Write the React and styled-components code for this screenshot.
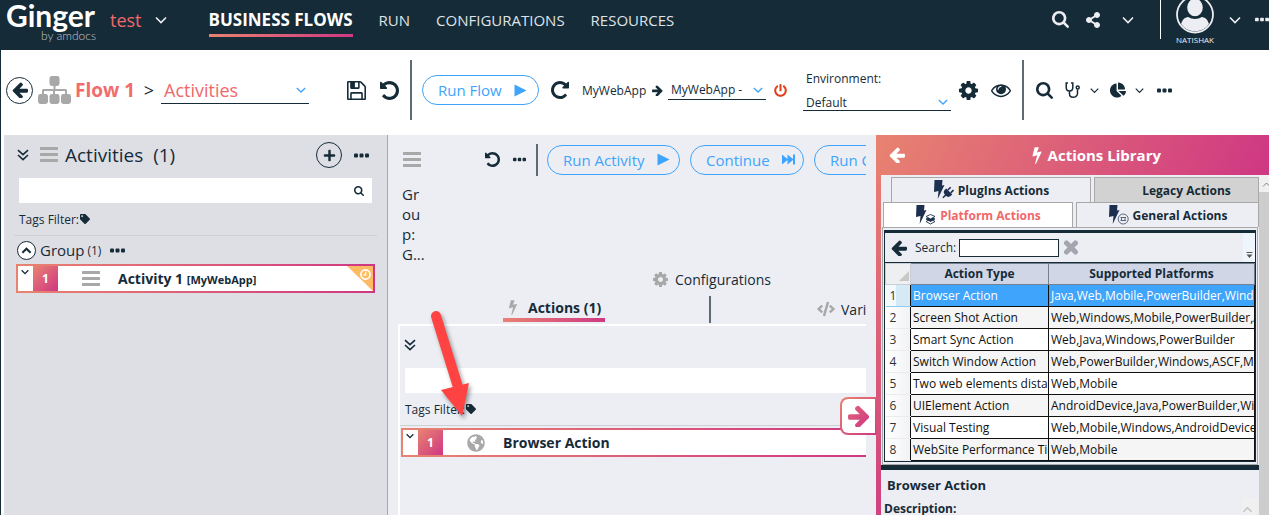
import React from "react";
import styled, { createGlobalStyle, css } from "styled-components";
import {
  FaChartPie,
  FaCode,
  FaGlobeAmericas,
  FaPlus,
  FaPowerOff,
  FaShareAlt,
  FaTag,
} from "react-icons/fa";

const ink = "#162b38";
const blue = "#3fa4fb";
const coral = "#f0686a";
const grey = "#a8a8a8";
const panel = "#edeef4";
const sunset = "linear-gradient(135deg, #e88370, #cf3783)";
const sunsetRow = "linear-gradient(90deg, #e88370, #cf3783)";

const GlobalStyle = createGlobalStyle`
  * { box-sizing: border-box; }
  body {
    margin: 0;
    background: #fff;
    color: ${ink};
    font-family: "Open Sans", "Noto Sans", sans-serif;
    font-size: 12px;
  }
  button, input, select { font: inherit; color: inherit; margin: 0; }
  svg { display: block; flex: none; }
  h1, h2, h3, p { margin: 0; font-weight: inherit; font-size: inherit; }
`;

/* ---------- icons ---------- */

const shapes = {
  search:
    "M1216 832q0-185-131.5-316.5t-316.5-131.5-316.5 131.5-131.5 316.5 131.5 316.5 316.5 131.5 316.5-131.5 131.5-316.5zm512 832q0 52-38 90t-90 38q-54 0-90-38l-343-342q-179 124-399 124-143 0-273.5-55.5t-225-150-150-225-55.5-273.5 55.5-273.5 150-225 225-150 273.5-55.5 273.5 55.5 225 150 150 225 55.5 273.5q0 220-124 399l343 343q37 37 37 90z",
  undo:
    "M1664 896q0 156-61 298t-164 245-245 164-298 61q-172 0-327-72.5t-264-204.5q-7-10-6.5-22.5t8.5-20.5l137-138q10-9 25-9 16 2 23 12 73 95 179 147t225 52q104 0 198.5-40.5t163.5-109.5 109.5-163.5 40.5-198.5-40.5-198.5-109.5-163.5-163.5-109.5-198.5-40.5q-98 0-188 35.5t-160 101.5l137 138q31 30 14 69-17 40-59 40h-448q-26 0-45-19t-19-45v-448q0-42 40-59 39-17 69 14l130 129q107-101 244.5-156.5t284.5-55.5q156 0 298 61t245 164 164 245 61 298z",
  cog:
    "M1152 896q0-106-75-181t-181-75-181 75-75 181 75 181 181 75 181-75 75-181zm512-109v222q0 12-8 23t-20 13l-185 28q-19 54-39 91 35 50 107 138 10 12 10 25t-9 23q-27 37-99 108t-94 71q-12 0-26-9l-138-108q-44 23-91 38-16 136-29 186-7 28-36 28h-222q-14 0-24.5-8.5t-11.5-21.5l-28-184q-49-16-90-37l-141 107q-10 9-25 9-14 0-25-11-126-114-165-168-7-10-7-23 0-12 8-23 15-21 51-66.5t54-70.5q-27-50-41-99l-183-27q-13-2-21-12.5t-8-23.5v-222q0-12 8-23t19-13l186-28q14-46 39-92-40-57-107-138-10-12-10-24 0-10 9-23 26-36 98.5-107.5t94.5-71.5q13 0 26 10l138 107q44-23 91-38 16-136 29-186 7-28 36-28h222q14 0 24.5 8.5t11.5 21.5l28 184q49 16 90 37l142-107q9-9 24-9 13 0 25 10 129 119 165 170 7 8 7 22 0 12-8 23-15 21-51 66.5t-54 70.5q26 50 41 98l183 28q13 2 21 12.5t8 23.5z",
  arrow:
    "M1664 896v128q0 53-32.5 90.5t-84.5 37.5h-704l293 294q38 36 38 90t-38 90l-75 76q-37 37-90 37-52 0-91-37l-651-652q-37-37-37-90 0-52 37-91l651-650q38-38 91-38 52 0 90 38l75 74q38 38 38 91t-38 91l-293 293h704q52 0 84.5 37.5t32.5 90.5z",
  bolt:
    "M1333 566q18 20 7 44l-540 1157q-13 25-42 25-4 0-14-2-17-5-25.5-19t-4.5-30l197-808-406 101q-4 1-12 1-18 0-31-11-18-15-13-39l201-825q4-14 16-23t28-9h328q19 0 32 12.5t13 29.5q0 8-5 18l-171 463 396-98q8-2 12-2 19 0 34 15z",
  eye:
    "M1664 960q-152-236-381-353 61 104 61 225 0 185-131.5 316.5t-316.5 131.5-316.5-131.5-131.5-316.5q0-121 61-225-229 117-381 353 133 205 333.5 326.5t434.5 121.5 434.5-121.5 333.5-326.5zm-720-384q0-20-14-34t-34-14q-125 0-214.5 89.5t-89.5 214.5q0 20 14 34t34 14 34-14 14-34q0-86 61-147t147-61q20 0 34-14t14-34zm848 384q0 34-20 69-140 230-376.5 368.5t-499.5 138.5-499.5-139-376.5-368q-20-35-20-69t20-69q140-229 376.5-368t499.5-139 499.5 139 376.5 368q20 35 20 69z",
  save:
    "M512 1536h768v-384h-768v384zm896 0h128v-896q0-14-10-38.5t-20-34.5l-281-281q-10-10-34-20t-39-10v416q0 40-28 68t-68 28h-576q-40 0-68-28t-28-68v-416h-128v1280h128v-416q0-40 28-68t68-28h832q40 0 68 28t28 68v416zm-384-928v-320q0-13-9.5-22.5t-22.5-9.5h-192q-13 0-22.5 9.5t-9.5 22.5v320q0 13 9.5 22.5t22.5 9.5h192q13 0 22.5-9.5t9.5-22.5zm640 32v928q0 40-28 68t-68 28h-1344q-40 0-68-28t-28-68v-1344q0-40 28-68t68-28h928q40 0 88 20t76 48l280 280q28 28 48 76t20 88z",
};

const Glyph = ({ name, size = 18, flip, fill = "currentColor", box = "128 128 1536 1536" }) => (
  <svg width={size} height={size} viewBox={box} fill={fill} aria-hidden="true">
    <path d={shapes[name]} transform={flip ? "translate(1792 0) scale(-1 1)" : undefined} />
  </svg>
);

const Chevron = ({ size = 11, color = "currentColor", up, weight = 1.6 }) => (
  <svg width={size} height={size} viewBox="0 0 12 12" fill="none" stroke={color} strokeWidth={weight} aria-hidden="true">
    <path d={up ? "M1.5 8.5 6 4l4.5 4.5" : "M1 3.5 6 8.5l5-5"} />
  </svg>
);

const DoubleChevron = () => (
  <svg width="12" height="12" viewBox="0 0 12 12" fill="none" stroke="currentColor" strokeWidth="1.6" aria-hidden="true">
    <path d="M1 1.2 6 5.6l5-4.4M1 6 6 10.6 11 6" />
  </svg>
);

const Dots = ({ size = 15 }) => (
  <svg width={size} height="5" viewBox="0 0 15 5" fill="currentColor" aria-hidden="true">
    <rect width="4" height="4" y="0.5" rx="1" />
    <rect width="4" height="4" x="5.5" y="0.5" rx="1" />
    <rect width="4" height="4" x="11" y="0.5" rx="1" />
  </svg>
);

const Bars = () => (
  <svg width="18" height="16" viewBox="0 0 18 16" fill={grey} aria-hidden="true">
    <rect width="18" height="3" rx="0.5" />
    <rect y="6" width="18" height="3" rx="0.5" />
    <rect y="12" width="18" height="3" rx="0.5" />
  </svg>
);

const Cross = () => (
  <svg width="16" height="15" viewBox="0 0 16 15" fill="none" stroke="currentColor" strokeWidth="5" strokeLinecap="round" aria-hidden="true">
    <path d="M3.500 3l9 9M12.500 3l-9 9" />
  </svg>
);

const Sitemap = () => (
  <svg width="33" height="28" viewBox="0 0 33 28" fill={grey} aria-hidden="true">
    <rect x="11.5" y="0" width="10" height="10" rx="2.4" />
    <rect x="0" y="18" width="10" height="10" rx="2.4" />
    <rect x="11.5" y="18" width="10" height="10" rx="2.4" />
    <rect x="23" y="18" width="10" height="10" rx="2.4" />
    <path d="M15.500 9h2v4h10q1.500 0 1.500 1.500V19h-2v-4h-10v4h-2v-4H6v4H4v-4.500Q4 13 5.500 13h10z" />
  </svg>
);

const Stethoscope = () => (
  <svg width="16" height="17" viewBox="0 0 16 17" fill="none" stroke={ink} strokeWidth="1.5" aria-hidden="true">
    <path d="M3 1H1.200v4.500q0 3.500 3.300 3.500t3.300-3.500V1H6M4.500 9v3q0 3.200 3.600 3.200t4.400-3.400V7.500" />
    <circle cx="12.700" cy="5.600" r="1.500" />
  </svg>
);

const Play = () => (
  <svg width="13" height="13" viewBox="0 0 13 13" fill="currentColor" aria-hidden="true">
    <path d="M0.500 0.500 12.500 6.500 0.500 12.500z" />
  </svg>
);

const FastForward = () => (
  <svg width="13" height="11" viewBox="0 0 13 11" fill="currentColor" aria-hidden="true">
    <path d="M0 0.500 5.500 5V0.500L11 5V0.500h2v10h-2V6l-5.500 4.500V6L0 10.500z" />
  </svg>
);

const Avatar = () => (
  <svg width="38" height="34" viewBox="0 5 38 34" aria-hidden="true">
    <circle cx="19" cy="19.500" r="18" fill={ink} stroke={panel} strokeWidth="1.800" />
    <clipPath id="face"><circle cx="19" cy="19.500" r="16.800" /></clipPath>
    <g clipPath="url(#face)" fill={panel}>
      <path d="M4 38q0-15 8-16 7 4 14 0 8 1 8 16z" />
      <ellipse cx="19" cy="12.500" rx="8.500" ry="9.500" stroke={ink} strokeWidth="1.400" />
    </g>
  </svg>
);

const BoltBadge = ({ kind }) => (
  <svg width="21" height="20" viewBox="0 0 21 20" aria-hidden="true">
    <path d="M1.500 0h8L9 5.500l2.500-.5L4.700 19l.8-8-4.500 1z" fill="#1d2f4f" />
    {kind === "plug" && (
      <g transform="rotate(45 15 13)" fill="#1d2f4f">
        <rect x="12" y="7" width="1.600" height="4" />
        <rect x="16" y="7" width="1.600" height="4" />
        <path d="M10.500 11h8.500v2q0 3.500-4.200 3.500T10.500 13zM14 16h1.600v4H14z" />
      </g>
    )}
    {kind === "layers" && (
      <g fill="#fff" stroke="#1d2f4f" strokeWidth="0.900">
        <path d="M11 16.500l4.500 2.500 4.500-2.500-4.500-2.500z" />
        <path d="M11 14l4.500 2.500L20 14l-4.500-2.500z" fill="#1d2f4f" />
        <path d="M11 11.500l4.500 2.500 4.500-2.500-4.500-2z" />
      </g>
    )}
    {kind === "ring" && (
      <g fill="none" stroke="#4b5870" strokeWidth="0.900">
        <circle cx="15.200" cy="14" r="5" />
        <path d="M12.500 12.500h5.500M13.500 12.500v3M17 12.500v3M12.500 15.500h5.500" />
      </g>
    )}
  </svg>
);

const Clock = () => (
  <svg width="26" height="25" viewBox="0 0 26 25" aria-hidden="true">
    <path d="M0 0h26v25z" fill="#fdbb63" />
    <circle cx="18.500" cy="8.500" r="4.600" fill="none" stroke="#fff" strokeWidth="1.700" />
    <path d="M18.700 5.800v3h-2.500" fill="none" stroke="#fff" strokeWidth="1.200" />
  </svg>
);

/* ---------- shared parts ---------- */

const IconButton = styled.button`
  display: inline-flex;
  align-items: center;
  justify-content: center;
  flex: none;
  padding: 0;
  border: 0;
  background: none;
  cursor: pointer;
  color: ${(p) => p.$color || "inherit"};
  margin-left: ${(p) => p.$gap || 0}px;
`;

const RoundButton = styled(IconButton)`
  width: ${(p) => p.$size}px;
  height: ${(p) => p.$size}px;
  border: 1px solid ${ink};
  border-radius: 50%;
  background: ${(p) => p.$fill || "transparent"};
`;

const Rule = styled.span`
  flex: none;
  width: 2px;
  height: ${(p) => p.$height}px;
  margin-left: ${(p) => p.$gap}px;
  background: #5c6b74;
`;

const Pill = styled.button`
  flex: none;
  display: inline-flex;
  align-items: center;
  gap: 12px;
  height: 30px;
  width: ${(p) => p.$width}px;
  padding: 0 0 0 15px;
  margin-left: ${(p) => p.$gap}px;
  border: 1px solid ${blue};
  border-radius: 15px;
  background: ${(p) => p.$fill || "transparent"};
  color: ${blue};
  font-size: 15px;
  line-height: 20px;
  white-space: nowrap;
`;

const SelectBox = styled.span`
  flex: none;
  display: flex;
  align-items: center;
  width: ${(p) => p.$width}px;
  height: ${(p) => p.$height}px;
  margin-left: ${(p) => p.$gap || 0}px;
  margin-top: ${(p) => p.$drop || 0}px;
  padding-right: ${(p) => p.$inset}px;
  border-bottom: 1px solid ${ink};
  color: ${(p) => p.$color || ink};
  font-size: ${(p) => p.$font}px;
  select {
    flex: 1;
    min-width: 0;
    padding: 0 0 0 3px;
    border: 0;
    background: none;
    appearance: none;
    outline: none;
  }
`;

const UnderSelect = ({ label, value, ...rest }) => (
  <SelectBox {...rest}>
    <select aria-label={label} defaultValue={value}>
      <option>{value}</option>
    </select>
    <Chevron size={10} color={blue} />
  </SelectBox>
);

/* ---------- header ---------- */

const Shell = styled.div`
  display: flex;
  flex-direction: column;
  min-height: 100vh;
  overflow: hidden;
  border-left: 1px solid ${ink};
`;

const Header = styled.header`
  display: flex;
  align-items: flex-start;
  height: 50px;
  padding-left: 5px;
  background: ${ink};
  color: ${panel};
`;

const Logo = styled.div`
  width: 92px;
  text-align: right;
  font-family: Lato, sans-serif;
  color: #fff;
  strong { display: block; font-size: 30px; line-height: 30px; text-align: left; }
  small { display: block; padding-right: 2px; font-size: 12px; font-weight: 300; line-height: 12px; color: #c3c9cd; }
`;

const Solution = styled.button`
  display: flex;
  align-items: center;
  gap: 13px;
  height: 39px;
  margin-left: 12px;
  padding: 0;
  border: 0;
  background: none;
  font-size: 18px;
  span { color: ${coral}; }
`;

const Nav = styled.nav`
  display: flex;
  gap: 26px;
  margin-left: 42px;
`;

const NavLink = styled.a`
  padding-top: 9px;
  height: 37px;
  line-height: 22px;
  font-size: 15px;
  color: #dfe3e6;
  text-decoration: none;
  white-space: nowrap;
  ${(p) =>
    p.$active &&
    css`
      font-size: 17px;
      font-weight: 700;
      color: #fff;
      border-bottom: 3px solid;
      border-image: ${sunsetRow} 1;
    `}
`;

const HeaderTools = styled.div`
  display: flex;
  align-items: center;
  height: 39px;
  margin-left: auto;
`;

const User = styled.div`
  display: flex;
  flex-direction: column;
  align-items: center;
  width: 69px;
  border-left: 1px solid #fff;
  height: 39px;
  font-size: 8px;
  line-height: 12px;
`;

/* ---------- toolbar ---------- */

const Toolbar = styled.div`
  display: flex;
  align-items: center;
  height: 85px;
  padding: 0 0 5px 5px;
  white-space: nowrap;
`;

const FlowName = styled.h1`
  width: 63px;
  margin-left: 4px;
  font-size: 19px;
  font-weight: 700;
  color: #f26c6d;
`;

const Crumb = styled.span`
  width: 22px;
  font-size: 18px;
  text-align: center;
`;

const Target = styled.span`
  width: 64px;
  margin-left: 13px;
  font-size: 12px;
`;

const Environment = styled.div`
  flex: none;
  width: 148px;
  margin-left: 16px;
  padding-top: 2px;
  p { padding-left: 3px; line-height: 16px; font-size: 12px; }
`;

/* ---------- work area ---------- */

const Work = styled.main`
  flex: 1;
  display: grid;
  grid-template-columns: 384px minmax(0, 1fr) 393px;
  padding-left: 3px;
`;

const Activities = styled.section`
  min-width: 0;
  padding-right: 10px;
  border-right: 1px solid ${grey};
  background: #dedfe5;
`;

const PanelHead = styled.div`
  display: flex;
  align-items: center;
  height: 40px;
  padding: 0 8px 0 13px;
  h2 { margin: 0 auto 0 7px; font-size: 19px; white-space: pre; }
`;

const SearchField = styled.label`
  display: flex;
  align-items: center;
  height: 25px;
  margin: ${(p) => p.$margin};
  padding-right: 8px;
  background: #fff;
  input { flex: 1; min-width: 0; border: 0; background: none; outline: none; }
`;

const TagsFilter = styled.div`
  display: flex;
  align-items: center;
  gap: 1px;
  height: 32px;
  margin-left: ${(p) => p.$indent}px;
  font-size: 12px;
`;

const Divider = styled.div`
  height: 1px;
  margin-left: ${(p) => p.$indent}px;
  background: #cfd0d5;
`;

const GroupHead = styled.div`
  display: flex;
  align-items: center;
  height: 28px;
  padding-left: 13px;
  h3 { margin-left: 4px; font-size: 15px; }
  small { margin: 0 9px 0 3px; font-size: 12px; }
`;

const Item = styled.div`
  display: flex;
  align-items: center;
  height: 29px;
  margin: 0 ${(p) => (p.$open ? 0 : 2)}px 0 ${(p) => p.$indent}px;
  border: 2px solid;
  border-width: ${(p) => (p.$open ? "2px 0 2px 2px" : "2px")};
  border-image: ${sunsetRow} 1;
  background: #fff;
`;

const Fold = styled.button`
  align-self: stretch;
  flex: none;
  width: 15px;
  padding: 2px 0 0 3px;
  border: 0;
  background: none;
  display: flex;
`;

const Index = styled.span`
  flex: none;
  width: 25px;
  line-height: 25px;
  text-align: center;
  font-weight: 700;
  font-size: 12px;
  color: #fff;
  background: ${sunset};
`;

const ItemIcon = styled.span`
  flex: none;
  width: 60px;
  padding-left: 24px;
`;

const ItemName = styled.strong`
  flex: 1;
  font-size: 14px;
  white-space: nowrap;
  small { font-size: 11px; }
`;

const Detail = styled.section`
  position: relative;
  min-width: 0;
  padding-right: 10px;
  background: ${panel};
`;

const Clip = styled.div`
  overflow: hidden;
  height: 100%;
  display: flex;
  flex-direction: column;
`;

const RunBar = styled.div`
  display: flex;
  align-items: center;
  flex: none;
  height: 49px;
  padding-left: 15px;
`;

const GroupPath = styled.p`
  height: 82px;
  padding-left: 14px;
  font-size: 15px;
  line-height: 20px;
`;

const TabRow = styled.div`
  display: flex;
  flex: none;
  justify-content: ${(p) => (p.$center ? "center" : "flex-start")};
  height: ${(p) => p.$height}px;
  padding-left: ${(p) => p.$indent || 0}px;
`;

const Tab = styled.button`
  flex: none;
  display: flex;
  align-items: center;
  gap: ${(p) => p.$gap}px;
  width: ${(p) => p.$width || "auto"};
  height: 26px;
  margin-left: ${(p) => p.$indent || 0}px;
  padding: 0;
  border: 0;
  background: none;
  font-size: 14px;
  white-space: nowrap;
  ${(p) =>
    p.$active &&
    css`
      font-weight: 700;
      border-bottom: 4px solid;
      border-image: ${sunsetRow} 1;
    `}
`;

const ActionsBox = styled.div`
  flex: 1;
  margin-left: 10px;
  border: 2px solid #fff;
  border-width: 2px 0 0 2px;
`;

const BoxTop = styled.div`
  display: flex;
  align-items: center;
  height: 42px;
  padding: 0 0 4px 3px;
`;

const BelowDivider = styled.div`
  padding-top: 2px;
`;

const Expander = styled.button`
  position: absolute;
  top: 262px;
  right: 0;
  z-index: 1;
  display: flex;
  align-items: center;
  justify-content: center;
  width: 36px;
  height: 38px;
  padding: 0;
  border: 2px solid transparent;
  border-right-width: 1px;
  border-radius: 8px 0 0 8px;
  background: linear-gradient(#fff, #fff) padding-box, ${sunset} border-box;
`;

const Pointer = styled.svg`
  position: absolute;
  top: 166px;
  left: 36px;
  filter: drop-shadow(2px 3px 2px rgba(0, 0, 0, 0.4));
  pointer-events: none;
`;

/* ---------- library ---------- */

const Library = styled.aside`
  min-width: 0;
  display: flex;
  flex-direction: column;
  border-left: 5px solid;
  border-image: linear-gradient(180deg, #e88370, #cf4080) 1;
`;

const LibraryHead = styled.div`
  display: flex;
  align-items: center;
  height: 40px;
  margin-left: -5px;
  padding: 0 108px 0 13px;
  background: linear-gradient(115deg, #e88370, #cf3783);
  color: #fff;
  h2 {
    display: flex;
    align-items: center;
    gap: 2px;
    margin-left: auto;
    font-size: 15px;
    font-weight: 700;
    white-space: nowrap;
  }
`;

const LibraryBody = styled.div`
  flex: 1;
  display: flex;
  background: ${panel};
`;

const LibraryMain = styled.div`
  flex: 1;
  min-width: 0;
  padding-top: 2px;
`;

const Scroll = styled.div`
  width: 10px;
  background: #cdcdcd;
  overflow: hidden;
  span { display: block; height: 17px; padding: 5px 0 0 3px; background: #f0f0f0; }
`;

const Sheets = styled.div`
  display: flex;
  gap: 3px;
  padding-left: ${(p) => p.$indent}px;
`;

const Sheet = styled.button`
  flex: ${(p) => (p.$width ? "none" : "1")};
  display: flex;
  align-items: center;
  justify-content: center;
  gap: 4px;
  width: ${(p) => p.$width || "auto"};
  height: 25px;
  padding: 0 0 0 ${(p) => p.$inset || 0}px;
  border: 1px solid ${grey};
  border-bottom-width: 0;
  background: ${(p) => p.$fill || panel};
  color: ${(p) => p.$color || ink};
  font-size: 12px;
  font-weight: 700;
  white-space: nowrap;
`;

const SheetBody = styled.div`
  margin: 0 1px;
  padding: 2px 1px 2px;
  border: 1px solid ${grey};
`;

const Grid = styled.div`
  border: 1px solid ${ink};
  border-top-width: 3px;
`;

const GridSearch = styled.div`
  display: flex;
  align-items: center;
  height: 30px;
  padding-left: 6px;
  border-bottom: 1px solid ${ink};
  label { margin: 0 3px 0 8px; font-size: 12px; }
  input { width: 100px; height: 18px; margin-right: 4px; padding: 0 3px; border: 1px solid ${ink}; background: #fff; }
`;

const GripTail = styled.span`
  align-self: stretch;
  display: flex;
  align-items: flex-end;
  width: 12px;
  margin-left: auto;
  padding: 0 0 4px 3px;
  background: #eef5fd;
`;

const Table = styled.table`
  width: 100%;
  table-layout: fixed;
  border-collapse: collapse;
  background: #fff;
  color: #111;
  thead th {
    height: 21px;
    padding: 0;
    border: 1px solid #75808f;
    background: #d0d6e6;
    color: ${ink};
    font-size: 12px;
    line-height: 16px;
  }
  thead th:first-child { background: #eeeff1; border-color: #c9ced6; }
  thead svg { margin: 4px 1px 0 auto; }
`;

const Row = styled.tr`
  background: ${(p) => (p.$on ? blue : p.$alt ? "#f5f5f5" : "#fff")};
  color: ${(p) => (p.$on ? "#fff" : "inherit")};
  td {
    height: 22px;
    padding: 0 2px;
    border: 1px solid #111;
    overflow: hidden;
    white-space: nowrap;
    font-size: 12px;
    line-height: 18px;
  }
  th {
    padding: 0 0 0 4px;
    border-bottom: 1px solid ${(p) => (p.$on ? "#8ccdf2" : "#ececec")};
    background: ${(p) => (p.$on ? "linear-gradient(90deg,#f2fafe 40%,#d5eaf4 40%)" : "linear-gradient(90deg,#fff,#f1f2f4)")};
    color: #333;
    font-weight: 400;
    font-size: 12px;
    text-align: left;
  }
`;

const Description = styled.div`
  padding-left: 3px;
  border-top: 5px solid ${ink};
  font-weight: 700;
  h3 { padding: 5px 0 0 3px; height: 28px; font-size: 13px; line-height: 20px; font-weight: 700; }
  div { display: flex; justify-content: space-between; padding-right: 2px; line-height: 22px; font-size: 12px; }
  span { display: flex; width: 15px; align-items: center; background: #f0f0f0; }
`;

const actions = [
  ["Browser Action", "Java,Web,Mobile,PowerBuilder,Windows"],
  ["Screen Shot Action", "Web,Windows,Mobile,PowerBuilder,Android"],
  ["Smart Sync Action", "Web,Java,Windows,PowerBuilder"],
  ["Switch Window Action", "Web,PowerBuilder,Windows,ASCF,Mobile"],
  ["Two web elements distance", "Web,Mobile"],
  ["UIElement Action", "AndroidDevice,Java,PowerBuilder,Windows"],
  ["Visual Testing", "Web,Mobile,Windows,AndroidDevice"],
  ["WebSite Performance Timing", "Web,Mobile"],
];

function TopHeader() {
  return (
    <Header>
      <Logo>
        <strong>Ginger</strong>
        <small>by amdocs</small>
      </Logo>
      <Solution>
        <span>test</span>
        <Chevron size={12} />
      </Solution>
      <Nav>
        <NavLink href="#flows" $active>BUSINESS FLOWS</NavLink>
        <NavLink href="#run">RUN</NavLink>
        <NavLink href="#configurations">CONFIGURATIONS</NavLink>
        <NavLink href="#resources">RESOURCES</NavLink>
      </Nav>
      <HeaderTools>
        <IconButton aria-label="Search"><Glyph name="search" size={17} box="64 128 1664 1664" /></IconButton>
        <IconButton aria-label="Share" $gap={16}><FaShareAlt size={16} /></IconButton>
        <IconButton aria-label="More tools" $gap={21}><Chevron size={12} /></IconButton>
        <IconButton as="span" $gap={26}>
          <User>
            <Avatar />
            NATISHAK
          </User>
        </IconButton>
        <IconButton aria-label="User menu"><Chevron size={12} /></IconButton>
        <IconButton aria-label="More" $gap={14}><Dots size={14} /></IconButton>
      </HeaderTools>
    </Header>
  );
}

function FlowToolbar() {
  return (
    <Toolbar>
      <RoundButton $size={27} aria-label="Back"><Glyph name="arrow" size={16} /></RoundButton>
      <IconButton as="span" $gap={5}><Sitemap /></IconButton>
      <FlowName>Flow 1</FlowName>
      <Crumb>&gt;</Crumb>
      <UnderSelect label="Flow section" value="Activities" $width={148} $height={27} $inset={3} $font={18} $color={coral} $gap={1} />
      <IconButton aria-label="Save" $gap={38}><Glyph name="save" size={19} /></IconButton>
      <IconButton aria-label="Undo" $gap={14}><Glyph name="undo" size={19} /></IconButton>
      <Rule $height={60} $gap={11} />
      <Pill $width={117} $gap={10} $fill="#fff">Run Flow<Play /></Pill>
      <IconButton aria-label="Refresh" $gap={12}><Glyph name="undo" size={18} flip /></IconButton>
      <Target>MyWebApp</Target>
      <IconButton as="span" $gap={6}><Glyph name="arrow" size={11} flip /></IconButton>
      <UnderSelect label="Agent" value="MyWebApp - " $width={98} $height={19} $inset={3} $font={12} $gap={5} />
      <IconButton aria-label="Stop agent" $gap={8} $color="#e2401b"><FaPowerOff size={13} /></IconButton>
      <Environment>
        <p>Environment:</p>
        <UnderSelect label="Environment" value="Default" $width={148} $height={17} $inset={3} $font={12} $drop={7} />
      </Environment>
      <IconButton aria-label="Settings" $gap={8}><Glyph name="cog" size={19} /></IconButton>
      <IconButton aria-label="Preview" $gap={13}><Glyph name="eye" size={20} box="0 0 1792 1792" /></IconButton>
      <Rule $height={60} $gap={11} />
      <IconButton aria-label="Find" $gap={12}><Glyph name="search" size={17} box="64 128 1664 1664" /></IconButton>
      <IconButton aria-label="Analyze" $gap={12}><Stethoscope /></IconButton>
      <IconButton aria-label="Analyze options" $gap={9}><Chevron size={9} /></IconButton>
      <IconButton aria-label="Reports" $gap={11}><FaChartPie size={16} /></IconButton>
      <IconButton aria-label="Report options" $gap={9}><Chevron size={9} /></IconButton>
      <IconButton aria-label="More" $gap={13}><Dots /></IconButton>
    </Toolbar>
  );
}

function ActivitiesPanel() {
  return (
    <Activities>
      <PanelHead>
        <IconButton aria-label="Collapse all"><DoubleChevron /></IconButton>
        <IconButton as="span" $gap={11}><Bars /></IconButton>
        <h2>{"Activities  (1)"}</h2>
        <RoundButton $size={26} aria-label="Add activity"><FaPlus size={13} /></RoundButton>
        <IconButton aria-label="Activity options" $gap={12}><Dots /></IconButton>
      </PanelHead>
      <SearchField $margin="3px 5px 0 15px">
        <input aria-label="Search activities" />
        <Glyph name="search" size={10} box="64 128 1664 1664" />
      </SearchField>
      <TagsFilter $indent={15}>Tags Filter:<FaTag size={10} /></TagsFilter>
      <Divider $indent={10} />
      <GroupHead>
        <RoundButton $size={19} $fill="#fff" aria-label="Collapse group"><Chevron size={11} up weight={2.2} /></RoundButton>
        <h3>Group</h3>
        <small>(1)</small>
        <Dots />
      </GroupHead>
      <Item $indent={12}>
        <Fold aria-label="Expand activity"><Chevron size={8} weight={2} /></Fold>
        <Index>1</Index>
        <ItemIcon><Bars /></ItemIcon>
        <ItemName>Activity 1 <small>[MyWebApp]</small></ItemName>
        <Clock />
      </Item>
    </Activities>
  );
}

function DetailPanel() {
  return (
    <Detail>
      <Clip>
        <RunBar>
          <Bars />
          <IconButton aria-label="Undo" $gap={64}><Glyph name="undo" size={15} /></IconButton>
          <IconButton aria-label="More" $gap={13}><Dots size={13} /></IconButton>
          <Rule $height={32} $gap={10} />
          <Pill $width={133} $gap={9}>Run Activity<Play /></Pill>
          <Pill $width={114} $gap={10}>Continue<FastForward /></Pill>
          <Pill $width={133} $gap={10}>Run Current</Pill>
        </RunBar>
        <GroupPath>Gr<br />ou<br />p:<br />G...</GroupPath>
        <TabRow $height={30} $indent={170} $center>
          <Tab $gap={7}><IconButton as="span" $color={grey}><Glyph name="cog" size={15} /></IconButton>Configurations</Tab>
        </TabRow>
        <TabRow $height={28} $indent={115}>
          <Tab $gap={7} $width="102px" $active>
            <IconButton as="span" $gap={2} $color={grey}><Glyph name="bolt" size={16} box="0 0 1792 1792" /></IconButton>
            Actions (1)
          </Tab>
          <Rule $height={27} $gap={104} />
          <Tab $gap={6} $indent={106}><IconButton as="span" $color={grey}><FaCode size={18} /></IconButton>Variables</Tab>
        </TabRow>
        <ActionsBox>
          <BoxTop><IconButton aria-label="Collapse all" $gap={1}><DoubleChevron /></IconButton></BoxTop>
          <SearchField $margin="0 0 0 5px"><input aria-label="Search actions" /></SearchField>
          <TagsFilter $indent={5}>Tags Filter:<FaTag size={10} /></TagsFilter>
          <Divider $indent={0} />
          <BelowDivider>
            <Item $indent={1} $open>
              <Fold aria-label="Expand action"><Chevron size={8} weight={2} /></Fold>
              <Index>1</Index>
              <ItemIcon><FaGlobeAmericas size={18} color={grey} /></ItemIcon>
              <ItemName>Browser Action</ItemName>
            </Item>
          </BelowDivider>
        </ActionsBox>
      </Clip>
      <Pointer width="60" height="130" viewBox="0 0 60 130" aria-hidden="true">
        <path d="M12 15 34 86" stroke="#ff4343" strokeWidth="10" strokeLinecap="round" />
        <path d="M17 89 45 82 38 115z" fill="#ff4343" />
      </Pointer>
      <Expander aria-label="Expand panel">
        <svg width="22" height="22" viewBox="128 128 1536 1536" aria-hidden="true">
          <defs>
            <linearGradient id="arrowFill" x1="1" y1="0" x2="0" y2="1">
              <stop offset="0" stopColor="#e0667a" />
              <stop offset="1" stopColor="#cf3783" />
            </linearGradient>
          </defs>
          <path d={shapes.arrow} fill="url(#arrowFill)" transform="translate(1792 0) scale(-1 1)" />
        </svg>
      </Expander>
    </Detail>
  );
}

function LibraryPanel() {
  return (
    <Library>
      <LibraryHead>
        <IconButton aria-label="Close library"><Glyph name="arrow" size={16} /></IconButton>
        <h2><Glyph name="bolt" size={18} box="0 0 1792 1792" />Actions Library</h2>
      </LibraryHead>
      <LibraryBody>
        <LibraryMain>
          <Sheets $indent={10}>
            <Sheet $width="200px"><BoltBadge kind="plug" />PlugIns Actions</Sheet>
            <Sheet $fill="#d2d2d2" $inset={20}>Legacy Actions</Sheet>
          </Sheets>
          <Sheets $indent={2}>
            <Sheet $width="190px" $fill="#fff" $color={coral}><BoltBadge kind="layers" />Platform Actions</Sheet>
            <Sheet><BoltBadge kind="ring" />General Actions</Sheet>
          </Sheets>
          <SheetBody>
            <Grid>
              <GridSearch>
                <Glyph name="arrow" size={16} />
                <label htmlFor="action-search">Search:</label>
                <input id="action-search" />
                <IconButton aria-label="Clear search" $color="#a3a6ae"><Cross /></IconButton>
                <GripTail>
                  <svg width="7" height="6" viewBox="0 0 7 6" fill="#555" aria-hidden="true"><path d="M0.500 0h6v1h-6zM0.500 2.500h6L3.500 6z" /></svg>
                </GripTail>
              </GridSearch>
              <Table>
                <colgroup><col width="25" /><col width="138" /><col /></colgroup>
                <thead>
                  <tr>
                    <th><svg width="10" height="10" viewBox="0 0 10 10" aria-hidden="true"><path d="M10 0v10H0z" fill="#c8c8c8" /></svg></th>
                    <th>Action Type</th>
                    <th>Supported Platforms</th>
                  </tr>
                </thead>
                <tbody>
                  {actions.map(([name, platforms], i) => (
                    <Row key={name} $on={i === 0} $alt={i % 2 === 1}>
                      <th scope="row">{i + 1}</th>
                      <td>{name}</td>
                      <td>{platforms}</td>
                    </Row>
                  ))}
                </tbody>
              </Table>
            </Grid>
          </SheetBody>
          <Description>
            <h3>Browser Action</h3>
            <div>Description:<span><Chevron size={11} color="#c3c3c3" up /></span></div>
          </Description>
        </LibraryMain>
        <Scroll><span><Chevron size={9} color="#777" up weight={1.2} /></span></Scroll>
      </LibraryBody>
    </Library>
  );
}

export default function App() {
  return (
    <Shell>
      <GlobalStyle />
      <TopHeader />
      <FlowToolbar />
      <Work>
        <ActivitiesPanel />
        <DetailPanel />
        <LibraryPanel />
      </Work>
    </Shell>
  );
}
